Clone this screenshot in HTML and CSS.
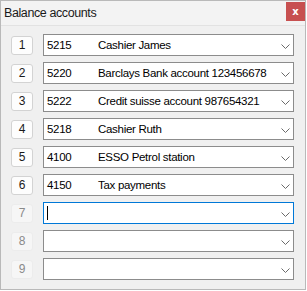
FILE: index.html
```html
<!DOCTYPE html>
<html lang="en">
<head>
  <meta charset="UTF-8" />
  <title>Balance accounts</title>
  <link rel="stylesheet" href="styles.css">
</head>
<body>
  <div class="window">
    <div class="titlebar">
      <span class="title">Balance accounts</span>
      <button class="close-btn">x</button>
    </div>

    <div class="rows">
      <div class="row">
        <div class="num">1</div>
        <div class="combo"><span class="code">5215</span><span class="name">Cashier James</span><svg class="chev" width="9" height="5"><polyline points="0.5,0.5 4.5,4.5 8.5,0.5" /></svg></div>
      </div>
      <div class="row">
        <div class="num">2</div>
        <div class="combo"><span class="code">5220</span><span class="name">Barclays Bank account 123456678</span><svg class="chev" width="9" height="5"><polyline points="0.5,0.5 4.5,4.5 8.5,0.5" /></svg></div>
      </div>
      <div class="row">
        <div class="num">3</div>
        <div class="combo"><span class="code">5222</span><span class="name">Credit suisse account 987654321</span><svg class="chev" width="9" height="5"><polyline points="0.5,0.5 4.5,4.5 8.5,0.5" /></svg></div>
      </div>
      <div class="row">
        <div class="num">4</div>
        <div class="combo"><span class="code">5218</span><span class="name">Cashier Ruth</span><svg class="chev" width="9" height="5"><polyline points="0.5,0.5 4.5,4.5 8.5,0.5" /></svg></div>
      </div>
      <div class="row">
        <div class="num">5</div>
        <div class="combo"><span class="code">4100</span><span class="name">ESSO Petrol station</span><svg class="chev" width="9" height="5"><polyline points="0.5,0.5 4.5,4.5 8.5,0.5" /></svg></div>
      </div>
      <div class="row">
        <div class="num">6</div>
        <div class="combo"><span class="code">4150</span><span class="name">Tax payments</span><svg class="chev" width="9" height="5"><polyline points="0.5,0.5 4.5,4.5 8.5,0.5" /></svg></div>
      </div>
      <div class="row">
        <div class="num off">7</div>
        <div class="combo focus"><span class="caret"></span><svg class="chev" width="9" height="5"><polyline points="0.5,0.5 4.5,4.5 8.5,0.5" /></svg></div>
      </div>
      <div class="row">
        <div class="num off">8</div>
        <div class="combo"><svg class="chev" width="9" height="5"><polyline points="0.5,0.5 4.5,4.5 8.5,0.5" /></svg></div>
      </div>
      <div class="row">
        <div class="num off">9</div>
        <div class="combo"><svg class="chev" width="9" height="5"><polyline points="0.5,0.5 4.5,4.5 8.5,0.5" /></svg></div>
      </div>
    </div>
  </div>
</body>
</html>
```

FILE: styles.css
```css
body {
  margin: 0;
  background-color: #ffffff;
  font-family: 'Liberation Sans', Arial, sans-serif;
  color: #000;
}

.window {
  width: 306px;
  height: 290px;
  box-sizing: border-box;
  border: 1px solid #b9b9b9;
  background-color: #f0f0f0;
}

.titlebar {
  height: 25px;
  display: flex;
  align-items: center;
  justify-content: space-between;
  padding-left: 3px;
  background-color: #f3f3f3;
  border-bottom: 1px solid #e2e2e2;
  box-sizing: border-box;
}

.title {
  font-size: 12.5px;
  letter-spacing: -0.4px;
  color: #1a1a1a;
}

.close-btn {
  width: 19px;
  height: 19px;
  margin-top: -3px;
  padding: 0;
  border: none;
  background-color: #c75050;
  color: white;
  font-family: 'DejaVu Sans', sans-serif;
  font-size: 10px;
  font-weight: bold;
  line-height: 17px;
}

.rows {
  display: flex;
  flex-direction: column;
  gap: 6px;
  padding: 8px 11px 0 10px;
}

.row {
  display: flex;
  align-items: center;
  gap: 10px;
  height: 22px;
}

.num {
  flex-shrink: 0;
  width: 22px;
  height: 19px;
  box-sizing: border-box;
  border: 1px solid #d3d3d3;
  border-radius: 3px;
  background-color: #fdfdfd;
  font-size: 12px;
  line-height: 17px;
  text-align: center;
  color: #1a1a1a;
}

.num.off {
  border-color: #ececec;
  background-color: #f6f6f6;
  color: #8a8a8a;
}

.combo {
  flex: 1;
  min-width: 0;
  height: 22px;
  box-sizing: border-box;
  border: 1px solid #8c8c8c;
  background-color: white;
  display: flex;
  align-items: center;
  padding-left: 3px;
  font-size: 11.5px;
  letter-spacing: -0.3px;
  position: relative;
  overflow: hidden;
}

.combo.focus {
  border-color: #0078d7;
}

.code {
  flex-shrink: 0;
  width: 51px;
}

.name {
  white-space: nowrap;
}

.caret {
  width: 1px;
  height: 14px;
  background-color: #000;
}

.chev {
  position: absolute;
  right: 3px;
  top: 9px;
  fill: none;
  stroke: #6a6a6a;
  stroke-width: 1;
}
```
